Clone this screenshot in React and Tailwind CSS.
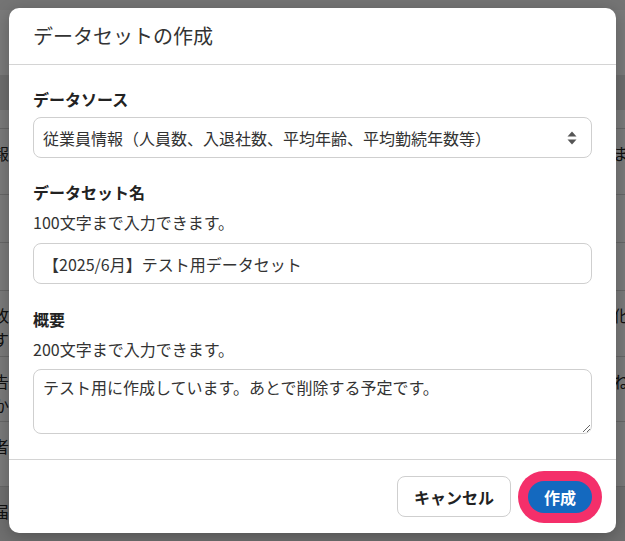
import { useState } from 'react'

const FONT = { fontFamily: '"Noto Sans CJK JP", "Noto Sans", sans-serif' }

const bgRows = [
  { h: 'h-[66px]', left: '報', right: 'いま' },
  { h: 'h-[48px]', left: '', right: '' },
  { h: 'h-[48px]', left: '', right: '' },
  { h: 'h-[66px]', left: '改', left2: 'す', right: '社化' },
  { h: 'h-[65px]', left: '告', left2: 'か', right: 'ね' },
  { h: 'h-[65px]', left: '者', right: '' },
  { h: 'h-[60px]', left: '届', right: '', shade: true },
]

function BackgroundPage() {
  return (
    <div className="h-[541px] w-full overflow-hidden bg-white text-[16px] text-[#222]">
      <div className="h-[10px] bg-[#f2f2f2]" />
      <div className="h-[65px]" />
      <div className="h-[35px] bg-[#e3e3e3]" />
      <div className="h-[19px] border-b border-[#d5d5d5]" />
      {bgRows.map((row, idx) => (
        <div
          key={idx}
          className={`flex justify-between border-b border-[#d5d5d5] pt-[12px] ${row.h} ${row.shade ? 'bg-[#e8e8e8]' : ''}`}
        >
          <div className="-ml-[7px] flex flex-col leading-[24px]">
            <span>{row.left}</span>
            {row.left2 && <span>{row.left2}</span>}
          </div>
          <div className="-mr-[10px] leading-[24px] tracking-[6px]">{row.right}</div>
        </div>
      ))}
    </div>
  )
}

function SelectArrows() {
  return (
    <svg width="10" height="14" viewBox="0 0 10 14" className="text-[#555]">
      <path d="M5 0.5 L9.5 5.5 H0.5 Z" fill="currentColor" />
      <path d="M5 13.5 L9.5 8.5 H0.5 Z" fill="currentColor" />
    </svg>
  )
}

export default function App() {
  const [name, setName] = useState('【2025/6月】テスト用データセット')
  const [summary, setSummary] = useState('テスト用に作成しています。あとで削除する予定です。')

  return (
    <div className="relative h-[541px] w-[625px] overflow-hidden" style={FONT}>
      <BackgroundPage />
      <div className="absolute inset-0 bg-black/[0.52]" />

      <div className="absolute left-[9px] top-[8px] w-[607px] rounded-[10px] bg-white shadow-[0_4px_16px_rgba(0,0,0,0.25)]">
        <header className="flex h-[57px] items-center border-b border-[#d4d4d4] px-6">
          <h2 className="text-[20px] leading-[30px] text-[#333]">データセットの作成</h2>
        </header>

        <div className="px-6 pb-[25px] pt-[22px] text-[16px] text-[#222]">
          <label className="block font-bold leading-6">データソース</label>
          <div className="mt-[6px] flex h-[41px] items-center justify-between rounded-lg border border-[#cfcfcf] pl-[9px] pr-[14px]">
            <span className="leading-6 text-[#333]">従業員情報（人員数、入退社数、平均年齢、平均勤続年数等）</span>
            <SelectArrows />
          </div>

          <label className="mt-[22px] block font-bold leading-6">データセット名</label>
          <p className="mt-[6px] leading-6 text-[#333]">100文字まで入力できます。</p>
          <input
            value={name}
            onChange={(e) => setName(e.target.value)}
            className="mt-[9px] block h-[41px] w-full rounded-lg border border-[#cfcfcf] px-[9px] text-[16px] text-[#333] outline-none"
            style={FONT}
          />

          <label className="mt-[23px] block font-bold leading-6">概要</label>
          <p className="mt-[6px] leading-6 text-[#333]">200文字まで入力できます。</p>
          <textarea
            value={summary}
            onChange={(e) => setSummary(e.target.value)}
            className="mt-[8px] block h-[65px] w-full resize-y rounded-lg border border-[#cfcfcf] px-[9px] py-[5px] text-[16px] leading-6 text-[#333] outline-none"
            style={FONT}
          />
        </div>

        <footer className="flex h-[74px] items-center justify-end gap-[7px] border-t border-[#d4d4d4] pr-[14px]">
          <button className="h-[41px] w-[114px] rounded-lg border border-[#cfcfcf] bg-white text-[16px] font-bold text-[#222]">
            キャンセル
          </button>
          <div className="rounded-full bg-[#f42f6a] p-[10px]">
            <button className="flex h-[32px] w-[64px] items-center justify-center rounded-full bg-[#1469bf] text-[16px] font-bold text-white">
              作成
            </button>
          </div>
        </footer>
      </div>
    </div>
  )
}
